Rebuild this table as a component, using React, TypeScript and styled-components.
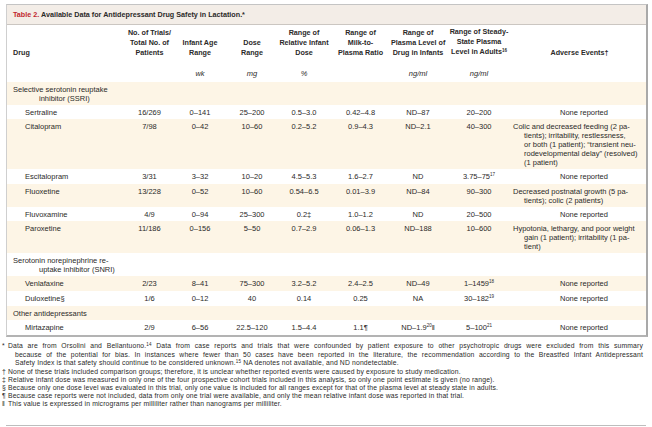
import styled, { createGlobalStyle } from "styled-components";

const GlobalStyle = createGlobalStyle`
  body {
    margin: 0;
    background: #ffffff;
    color: #2b2a29;
    font-family: "Liberation Sans", Arial, sans-serif;
  }
`;

const Page = styled.div`
  width: 652px;
  padding: 4px 4px 0 6px;
  box-sizing: border-box;
`;

const Frame = styled.div`
  width: 642px;
  box-sizing: border-box;
  border-left: 1px solid #cfcfcf;
  border-top: 1px solid #c4c4c4;
  border-right: 2px solid #a9a9a9;
  border-bottom: 2px solid #b3b3b3;
`;

const TitleBar = styled.div`
  height: 19px;
  line-height: 19px;
  padding-left: 6px;
  background: #f3ede7;
  border-bottom: 1px solid #cbc6c1;
  font-size: 7.2px;
  font-weight: bold;
  white-space: nowrap;
`;

const TableNo = styled.span`
  color: #c1272d;
`;

const Grid = styled.table`
  width: 100%;
  border-collapse: collapse;
  table-layout: fixed;
`;

const HeadCell = styled.th<{ $left?: boolean }>`
  padding: 2px 0 6px ${(p) => (p.$left ? "6px" : "0")};
  font-size: 7.2px;
  line-height: 10px;
  font-weight: bold;
  text-align: ${(p) => (p.$left ? "left" : "center")};
  vertical-align: bottom;
  white-space: nowrap;
`;

const UnitCell = styled.td`
  padding: 5px 0 4px;
  font-size: 7.5px;
  line-height: 9px;
  font-style: italic;
  text-align: center;
`;

const Row = styled.tr<{ $shade?: boolean }>`
  background: ${(p) => (p.$shade ? "#fdf5e6" : "#ffffff")};
`;

const Cell = styled.td`
  padding: 2.5px 0;
  font-size: 7.5px;
  line-height: 9px;
  text-align: center;
  vertical-align: top;
  white-space: nowrap;
`;

const DrugCell = styled(Cell)`
  text-align: left;
  padding-left: 18px;
`;

const GroupCell = styled(Cell)`
  text-align: left;
  padding-left: 6px;
`;

const Hang = styled.div`
  padding-left: 26px;
`;

const EventCell = styled(Cell)<{ $center?: boolean }>`
  text-align: ${(p) => (p.$center ? "center" : "left")};
  padding-left: ${(p) => (p.$center ? "9px" : "0")};
`;

const EventLine = styled.div<{ $first?: boolean }>`
  padding-left: ${(p) => (p.$first ? "0" : "11px")};
`;

const Sup = styled.span`
  font-size: 4.5px;
  position: relative;
  top: -2.5px;
`;

const Notes = styled.div`
  padding: 5px 0 0;
  margin-left: -4px;
  font-size: 6.8px;
  line-height: 8px;
  letter-spacing: 0.15px;
  white-space: nowrap;
`;

const Note = styled.div<{ $cont?: boolean; $full?: boolean }>`
  display: flex;
  width: ${(p) => (p.$full ? "641px" : "auto")};
  box-sizing: border-box;
  padding-left: ${(p) => (p.$cont ? "13px" : "0")};
`;

const NoteText = styled.span<{ $full?: boolean }>`
  flex: ${(p) => (p.$full ? "1" : "none")};
  white-space: ${(p) => (p.$full ? "normal" : "nowrap")};
  text-align: ${(p) => (p.$full ? "justify" : "left")};
  text-align-last: ${(p) => (p.$full ? "justify" : "auto")};
`;

const Mark = styled.span`
  width: 6px;
  flex: none;
  letter-spacing: 0;
`;

const Rule = styled.div`
  margin-top: 17px;
  width: 640px;
  border-top: 1px solid #bdbdbd;
`;

type Drug = {
  name: React.ReactNode;
  cells: React.ReactNode[];
  events: string[];
};

const ssri: Drug[] = [
  {
    name: "Sertraline",
    cells: ["16/269", "0–141", "25–200", "0.5–3.0", "0.42–4.8", "ND–87", "20–200"],
    events: ["None reported"],
  },
  {
    name: "Citalopram",
    cells: ["7/98", "0–42", "10–60", "0.2–5.2", "0.9–4.3", "ND–2.1", "40–300"],
    events: [
      "Colic and decreased feeding (2 pa-",
      "tients); irritability, restlessness,",
      "or both (1 patient); “transient neu-",
      "rodevelopmental delay” (resolved)",
      "(1 patient)",
    ],
  },
  {
    name: "Escitalopram",
    cells: [
      "3/31",
      "3–32",
      "10–20",
      "4.5–5.3",
      "1.6–2.7",
      "ND",
      <>
        3.75–75<Sup>17</Sup>
      </>,
    ],
    events: ["None reported"],
  },
  {
    name: "Fluoxetine",
    cells: ["13/228", "0–52", "10–60", "0.54–6.5", "0.01–3.9", "ND–84", "90–300"],
    events: ["Decreased postnatal growth (5 pa-", "tients); colic (2 patients)"],
  },
  {
    name: "Fluvoxamine",
    cells: ["4/9", "0–94", "25–300", "0.2‡", "1.0–1.2", "ND", "20–500"],
    events: ["None reported"],
  },
  {
    name: "Paroxetine",
    cells: ["11/186", "0–156", "5–50", "0.7–2.9", "0.06–1.3", "ND–188", "10–600"],
    events: [
      "Hypotonia, lethargy, and poor weight",
      "gain (1 patient); irritability (1 pa-",
      "tient)",
    ],
  },
];

const snri: Drug[] = [
  {
    name: "Venlafaxine",
    cells: [
      "2/23",
      "8–41",
      "75–300",
      "3.2–5.2",
      "2.4–2.5",
      "ND–49",
      <>
        1–1459<Sup>18</Sup>
      </>,
    ],
    events: ["None reported"],
  },
  {
    name: "Duloxetine§",
    cells: [
      "1/6",
      "0–12",
      "40",
      "0.14",
      "0.25",
      "NA",
      <>
        30–182<Sup>19</Sup>
      </>,
    ],
    events: ["None reported"],
  },
];

const other: Drug[] = [
  {
    name: "Mirtazapine",
    cells: [
      "2/9",
      "6–56",
      "22.5–120",
      "1.5–4.4",
      "1.1¶",
      <>
        ND–1.9<Sup>20</Sup>‖
      </>,
      <>
        5–100<Sup>21</Sup>
      </>,
    ],
    events: ["None reported"],
  },
];

const widths = [118, 49, 52, 52, 52, 61, 54, 68, 133];

const DrugRow = ({ drug, shade }: { drug: Drug; shade: boolean }) => {
  const single = drug.events.length === 1;
  return (
    <Row $shade={shade}>
      <DrugCell>{drug.name}</DrugCell>
      {drug.cells.map((c, i) => (
        <Cell key={i}>{c}</Cell>
      ))}
      <EventCell $center={single}>
        {single
          ? drug.events[0]
          : drug.events.map((line, i) => (
              <EventLine key={i} $first={i === 0}>
                {line}
              </EventLine>
            ))}
      </EventCell>
    </Row>
  );
};

const GroupRow = ({ lines, shade }: { lines: string[]; shade: boolean }) => (
  <Row $shade={shade}>
    <GroupCell colSpan={9}>
      {lines[0]}
      {lines[1] && <Hang>{lines[1]}</Hang>}
    </GroupCell>
  </Row>
);

const App = () => {
  return (
    <Page>
      <GlobalStyle />
      <Frame>
        <TitleBar>
          <TableNo>Table 2.</TableNo> Available Data for Antidepressant Drug Safety in Lactation.*
        </TitleBar>
        <Grid>
          <colgroup>
            {widths.map((w, i) => (
              <col key={i} style={{ width: w }} />
            ))}
          </colgroup>
          <thead>
            <tr>
              <HeadCell $left>Drug</HeadCell>
              <HeadCell>
                No. of Trials/
                <br />
                Total No. of
                <br />
                Patients
              </HeadCell>
              <HeadCell>
                Infant Age
                <br />
                Range
              </HeadCell>
              <HeadCell>
                Dose
                <br />
                Range
              </HeadCell>
              <HeadCell>
                Range of
                <br />
                Relative Infant
                <br />
                Dose
              </HeadCell>
              <HeadCell>
                Range of
                <br />
                Milk-to-
                <br />
                Plasma Ratio
              </HeadCell>
              <HeadCell>
                Range of
                <br />
                Plasma Level of
                <br />
                Drug in Infants
              </HeadCell>
              <HeadCell>
                Range of Steady-
                <br />
                State Plasma
                <br />
                Level in Adults<Sup>16</Sup>
              </HeadCell>
              <HeadCell>Adverse Events†</HeadCell>
            </tr>
            <tr>
              <UnitCell />
              <UnitCell />
              <UnitCell>wk</UnitCell>
              <UnitCell>mg</UnitCell>
              <UnitCell>%</UnitCell>
              <UnitCell />
              <UnitCell>ng/ml</UnitCell>
              <UnitCell>ng/ml</UnitCell>
              <UnitCell />
            </tr>
          </thead>
          <tbody>
            <GroupRow lines={["Selective serotonin reuptake", "inhibitor (SSRI)"]} shade />
            {ssri.map((d, i) => (
              <DrugRow key={i} drug={d} shade={i % 2 === 1} />
            ))}
            <GroupRow lines={["Serotonin norepinephrine re-", "uptake inhibitor (SNRI)"]} shade={false} />
            {snri.map((d, i) => (
              <DrugRow key={i} drug={d} shade={i % 2 === 0} />
            ))}
            <GroupRow lines={["Other antidepressants"]} shade />
            {other.map((d, i) => (
              <DrugRow key={i} drug={d} shade={false} />
            ))}
          </tbody>
        </Grid>
      </Frame>
      <Notes>
        <Note $full>
          <Mark>*</Mark>
          <NoteText $full>
            Data are from Orsolini and Bellantuono.<Sup>14</Sup> Data from case reports and trials that were confounded by
            patient exposure to other psychotropic drugs were excluded from this summary
          </NoteText>
        </Note>
        <Note $cont $full>
          <NoteText $full>
            because of the potential for bias. In instances where fewer than 50 cases have been reported in the literature,
            the recommendation according to the Breastfed Infant Antidepressant
          </NoteText>
        </Note>
        <Note $cont>
          <NoteText>
            Safety Index is that safety should continue to be considered unknown.<Sup>15</Sup> NA denotes not available, and
            ND nondetectable.
          </NoteText>
        </Note>
        <Note>
          <Mark>†</Mark>
          <NoteText>
            None of these trials included comparison groups; therefore, it is unclear whether reported events were caused by
            exposure to study medication.
          </NoteText>
        </Note>
        <Note>
          <Mark>‡</Mark>
          <NoteText>
            Relative infant dose was measured in only one of the four prospective cohort trials included in this analysis, so
            only one point estimate is given (no range).
          </NoteText>
        </Note>
        <Note>
          <Mark>§</Mark>
          <NoteText>
            Because only one dose level was evaluated in this trial, only one value is included for all ranges except for that
            of the plasma level at steady state in adults.
          </NoteText>
        </Note>
        <Note>
          <Mark>¶</Mark>
          <NoteText>
            Because case reports were not included, data from only one trial were available, and only the mean relative infant
            dose was reported in that trial.
          </NoteText>
        </Note>
        <Note>
          <Mark>‖</Mark>
          <NoteText>This value is expressed in micrograms per milliliter rather than nanograms per milliliter.</NoteText>
        </Note>
      </Notes>
      <Rule />
    </Page>
  );
};

export default App;
